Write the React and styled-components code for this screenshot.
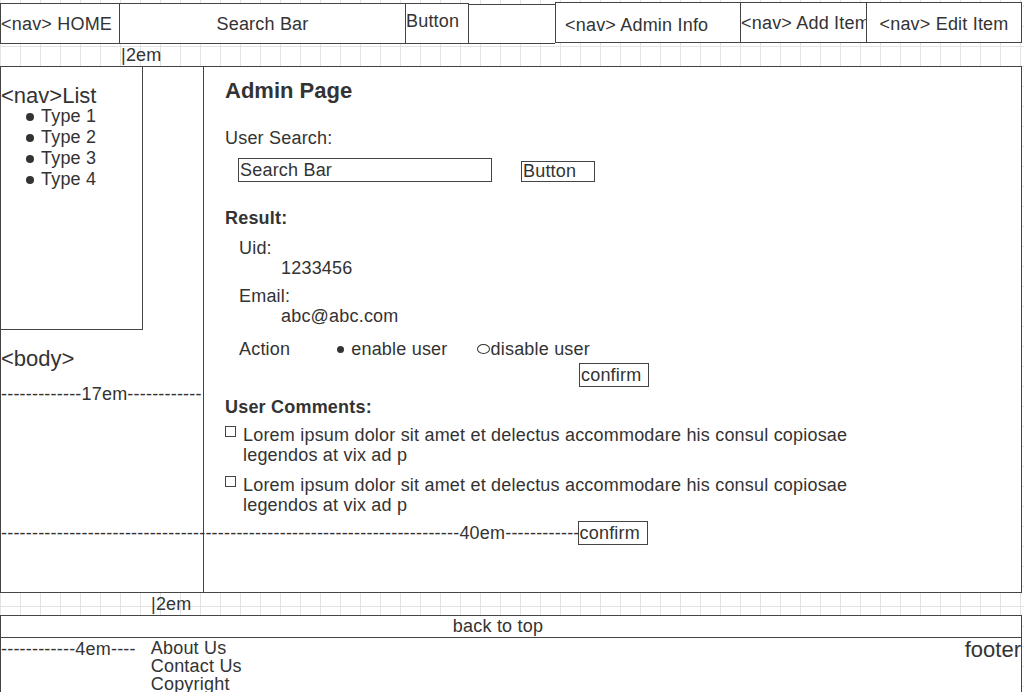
import styled, { createGlobalStyle } from "styled-components";

const GlobalStyle = createGlobalStyle`
  html, body {
    margin: 0;
    padding: 0;
  }
  body {
    font-family: "Liberation Sans", Arial, sans-serif;
    font-size: 18px;
    letter-spacing: 0.2px;
    color: #333;
    background-color: #fff;
    background-image:
      linear-gradient(to right, #e3e3e3 1px, transparent 1px),
      linear-gradient(to bottom, #e3e3e3 1px, transparent 1px);
    background-size: 20px 20px;
    background-position: 0 6px;
  }
  * {
    box-sizing: border-box;
  }
`;

const Page = styled.div`
  width: 1022px;
`;

// Top navigation
const Header = styled.header`
  display: flex;
  align-items: flex-start;
  height: 44px;
`;

const HeaderCell = styled.div`
  display: flex;
  align-items: ${(p) => p.$valign || "center"};
  justify-content: ${(p) => p.$justify || "flex-start"};
  width: ${(p) => p.$width}px;
  height: 41px;
  margin-top: ${(p) => p.$top}px;
  padding-top: ${(p) => p.$padTop || 0}px;
  padding-left: ${(p) => p.$padLeft || 0}px;
  border: 1px solid #444;
  border-left: ${(p) => (p.$noLeft ? "none" : "1px solid #444")};
  background: #fff;
  line-height: 20px;
  white-space: nowrap;
  overflow: hidden;
`;

const HeaderSpacer = styled.div`
  width: 86px;
  height: 40px;
  margin-top: 4px;
  border-top: 1px solid #444;
  border-bottom: 1px solid #444;
  background: #fff;
`;

// The grid strips that mark 2em
const Strip = styled.div`
  height: 22px;
  line-height: 22px;
  padding-left: ${(p) => p.$indent}px;
`;

// Main body
const Main = styled.main`
  display: grid;
  grid-template-columns: 203px 1fr;
  grid-template-rows: auto auto 1fr;
  height: 527px;
  border: 1px solid #444;
  background: #fff;
`;

const SideColumn = styled.aside`
  grid-column: 1;
  grid-row: 1 / 4;
  border-right: 1px solid #444;
`;

const NavBox = styled.nav`
  width: 142px;
  height: 263px;
  padding-top: 19px;
  border-right: 1px solid #444;
  border-bottom: 1px solid #444;
`;

const NavTitle = styled.div`
  font-size: 22px;
  line-height: 20px;
  letter-spacing: 0;
`;

const NavList = styled.ul`
  list-style: none;
  margin: 0;
  padding: 0 0 0 25px;
`;

const NavItem = styled.li`
  display: flex;
  align-items: center;
  line-height: 21px;

  &::before {
    content: "";
    width: 8px;
    height: 8px;
    margin-right: 7px;
    border-radius: 50%;
    background: #333;
  }
`;

const BodyLabel = styled.div`
  margin-top: 16px;
  font-size: 22px;
  line-height: 26px;
  letter-spacing: 0;
`;

const Measure = styled.div`
  margin-top: ${(p) => p.$top || 0}px;
  line-height: 22px;
  white-space: nowrap;
`;

const Content = styled.section`
  grid-column: 2;
  grid-row: 1;
  padding: 11px 0 0 21px;
`;

const Title = styled.h1`
  margin: 0;
  font-size: 22px;
  line-height: 26px;
  font-weight: bold;
  letter-spacing: 0;
`;

const Label = styled.div`
  margin-top: ${(p) => p.$top}px;
  line-height: 22px;
  font-weight: ${(p) => (p.$bold ? "bold" : "normal")};
`;

const SearchRow = styled.div`
  display: flex;
  align-items: flex-end;
  margin-top: 9px;
  padding-left: 13px;
`;

const SearchInput = styled.div`
  width: 254px;
  height: 24px;
  padding-left: 1px;
  border: 1px solid #444;
  line-height: 22px;
`;

const BoxButton = styled.div`
  width: ${(p) => p.$width}px;
  height: ${(p) => p.$height}px;
  margin-left: ${(p) => p.$left || 0}px;
  margin-top: ${(p) => p.$top || 0}px;
  padding-left: 1px;
  border: 1px solid #444;
  line-height: ${(p) => p.$height - 2}px;
  background: #fff;
`;

const Fields = styled.div`
  padding-left: 14px;
`;

const FieldLabel = styled.div`
  margin-top: ${(p) => p.$top}px;
  line-height: 20px;
`;

const FieldValue = styled.div`
  padding-left: 42px;
  line-height: 20px;
`;

const ActionRow = styled.div`
  display: flex;
  align-items: center;
  margin-top: 13px;
  line-height: 20px;
`;

const Radio = styled.span`
  display: flex;
  align-items: center;
  margin-left: ${(p) => p.$left}px;

  &::before {
    content: "";
    width: ${(p) => (p.$checked ? 7 : 11)}px;
    height: ${(p) => (p.$checked ? 7 : 8)}px;
    margin-right: ${(p) => (p.$checked ? 7 : 1)}px;
    border-radius: 50%;
    background: ${(p) => (p.$checked ? "#333" : "transparent")};
    border: ${(p) => (p.$checked ? "none" : "1px solid #333")};
  }
`;

const CommentList = styled.div`
  display: flex;
  flex-direction: column;
  gap: 10px;
  margin-top: 7px;
`;

const Comment = styled.div`
  display: flex;
  align-items: flex-start;
  line-height: 20px;
`;

const CheckBox = styled.span`
  flex: none;
  width: 11px;
  height: 11px;
  margin: 1px 7px 0 0;
  border: 1px solid #444;
`;

const CommentText = styled.span`
  width: 620px;
`;

const BottomMeasure = styled.div`
  grid-column: 1 / 3;
  grid-row: 2;
  display: flex;
  align-items: center;
  margin-top: 6px;
  line-height: 22px;
  white-space: nowrap;
  z-index: 1;
`;

// Footer
const BackToTop = styled.div`
  height: 23px;
  padding-right: 26px;
  border: 1px solid #444;
  background: #fff;
  text-align: center;
  line-height: 21px;
`;

const Footer = styled.footer`
  display: flex;
  align-items: flex-start;
  min-height: 80px;
  border: 1px solid #444;
  border-top: none;
  background: #fff;
`;

const FooterLinks = styled.div`
  display: flex;
  flex-direction: column;
  margin: 1px 0 0 15px;
  line-height: 18px;
`;

const FooterLabel = styled.div`
  margin-left: auto;
  font-size: 22px;
  line-height: 24px;
  letter-spacing: 0;
`;

const dashes = (n) => "-".repeat(n);

const comment =
  "Lorem ipsum dolor sit amet et delectus accommodare his consul copiosae legendos at vix ad p";

export default function App() {
  return (
    <Page>
      <GlobalStyle />
      <Header>
        <HeaderCell $width={120} $top={3}>
          {"<nav> HOME"}
        </HeaderCell>
        <HeaderCell $width={286} $top={3} $noLeft $justify="center">
          Search Bar
        </HeaderCell>
        <HeaderCell $width={63} $top={3} $noLeft $valign="flex-start" $padTop={7}>
          Button
        </HeaderCell>
        <HeaderSpacer />
        <HeaderCell $width={186} $top={2} $padTop={4} $padLeft={9}>
          {"<nav> Admin Info"}
        </HeaderCell>
        <HeaderCell $width={126} $top={2} $noLeft>
          {"<nav> Add Item"}
        </HeaderCell>
        <HeaderCell $width={155} $top={2} $noLeft $justify="center" $padTop={2}>
          {"<nav> Edit Item"}
        </HeaderCell>
      </Header>

      <Strip $indent={121}>|2em</Strip>

      <Main>
        <SideColumn>
          <NavBox>
            <NavTitle>{"<nav>List"}</NavTitle>
            <NavList>
              {["Type 1", "Type 2", "Type 3", "Type 4"].map((t) => (
                <NavItem key={t}>{t}</NavItem>
              ))}
            </NavList>
          </NavBox>
          <BodyLabel>{"<body>"}</BodyLabel>
          <Measure $top={11}>
            {dashes(13)}17em{dashes(12)}
          </Measure>
        </SideColumn>

        <Content>
          <Title>Admin Page</Title>
          <Label $top={23}>User Search:</Label>
          <SearchRow>
            <SearchInput>Search Bar</SearchInput>
            <BoxButton $width={74} $height={21} $left={29}>
              Button
            </BoxButton>
          </SearchRow>

          <Label $top={25} $bold>
            Result:
          </Label>
          <Fields>
            <FieldLabel $top={9}>Uid:</FieldLabel>
            <FieldValue>1233456</FieldValue>
            <FieldLabel $top={8}>Email:</FieldLabel>
            <FieldValue>abc@abc.com</FieldValue>
            <ActionRow>
              Action
              <Radio $checked $left={47}>
                enable user
              </Radio>
              <Radio $left={29}>disable user</Radio>
            </ActionRow>
          </Fields>
          <BoxButton $width={70} $height={24} $left={354} $top={4}>
            confirm
          </BoxButton>

          <Label $top={9} $bold>
            User Comments:
          </Label>
          <CommentList>
            <Comment>
              <CheckBox />
              <CommentText>{comment}</CommentText>
            </Comment>
            <Comment>
              <CheckBox />
              <CommentText>{comment}</CommentText>
            </Comment>
          </CommentList>
        </Content>

        <BottomMeasure>
          {dashes(74)}40em{dashes(12)}
          <BoxButton $width={70} $height={24} $left={-2}>
            confirm
          </BoxButton>
        </BottomMeasure>
      </Main>

      <Strip $indent={151}>|2em</Strip>

      <BackToTop>back to top</BackToTop>
      <Footer>
        <Measure>
          {dashes(12)}4em{dashes(4)}
        </Measure>
        <FooterLinks>
          <span>About Us</span>
          <span>Contact Us</span>
          <span>Copyright</span>
        </FooterLinks>
        <FooterLabel>footer</FooterLabel>
      </Footer>
    </Page>
  );
}
